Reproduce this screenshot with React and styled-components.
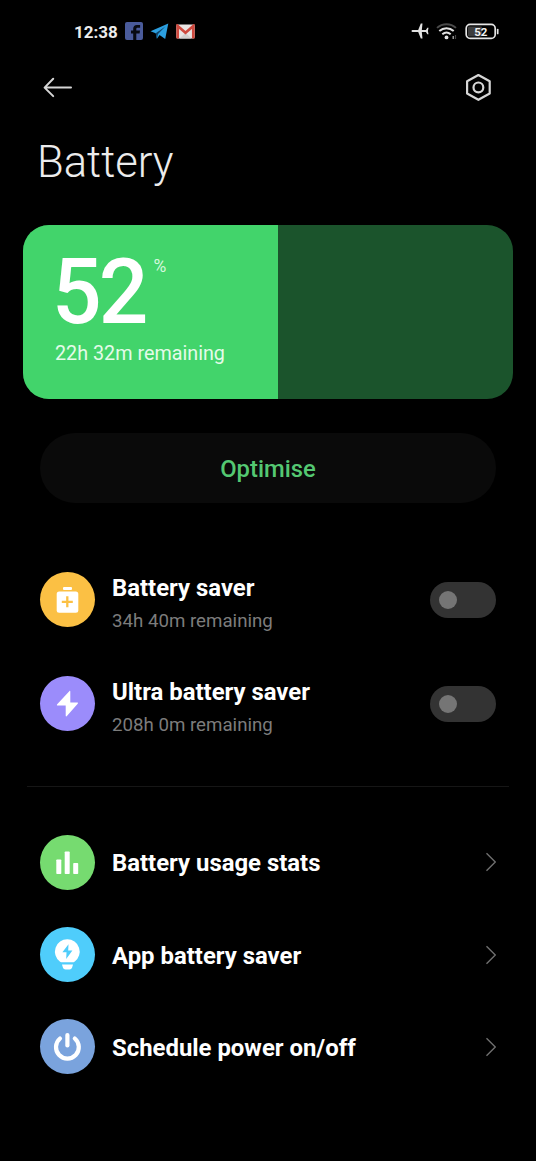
import React, { useState } from 'react';
import styled, { createGlobalStyle, css } from 'styled-components';


const GlobalStyle = createGlobalStyle`
  * { box-sizing: border-box; }
  body {
    margin: 0;
    background-color: #000;
    color: #fff;
    font-family: Roboto, "Liberation Sans", sans-serif;
  }
  button { font-family: inherit; border: none; padding: 0; cursor: pointer; }
`;
const Screen = styled('div')`
  width: 536px;
  height: 1161px;
  overflow: hidden;
  background-color: #000;
`;
const StatusBar = styled('div')`
  display: flex;
  justify-content: space-between;
  align-items: center;
  height: 62px;
  padding: 0 37px 0 74px;
`;
const StatusGroup = styled('div')`
  display: flex;
  align-items: center;
  gap: ${(p) => p.$gap}px;
`;
const Clock = styled('span')`
  width: 44px;
  padding-top: 1px;
  font-size: 17px;
  font-weight: 700;
  line-height: 20px;
  color: #ececec;
  white-space: nowrap;
`;
const NavBar = styled('header')`
  display: flex;
  justify-content: space-between;
  align-items: center;
  height: 52px;
  padding: 0 43px 0 42px;
`;
const IconButton = styled('button')`
  display: flex;
  background: none;
  color: #d6d6d6;
`;
const Title = styled('h1')`
  margin: 23px 0 0 37px;
  font-size: 43.6px;
  font-weight: 300;
  line-height: 52px;
  color: #ececec;
`;
const Gauge = styled('section')`
  display: flex;
  width: 490px;
  height: 174px;
  margin: 36px 0 0 23px;
  border-radius: 26px;
  overflow: hidden;
  background-color: #1b542c;
`;
const GaugeFill = styled('div')`
  height: 100%;
  padding: 27px 0 0 32px;
  background-color: #42d46b;
  white-space: nowrap;
`;
const Level = styled('div')`
  display: flex;
  align-items: flex-start;
  height: 86px;
`;
const LevelValue = styled('span')`
  margin-left: -3px;
  font-size: 91px;
  font-weight: 500;
  line-height: 80px;
  letter-spacing: -3px;
  transform: scaleX(0.96);
  transform-origin: left;
`;
const LevelUnit = styled('span')`
  margin: 3px 0 0 4px;
  font-size: 17.5px;
  font-weight: 400;
  line-height: 22px;
  color: #d5f8de;
`;
const Remaining = styled('div')`
  margin-top: 4px;
  font-size: 19.75px;
  line-height: 24px;
  color: #e4fbe9;
`;
const OptimiseButton = styled('button')`
  display: block;
  width: 456px;
  height: 70px;
  margin: 34px 0 0 40px;
  padding-top: 1px;
  border-radius: 35px;
  background-color: #0a0a0a;
  color: #54c872;
  font-size: 23.8px;
  font-weight: 500;
`;
const List = styled('div')`
  display: flex;
  flex-direction: column;
  padding: 0 40px 0 39.5px;
  margin-top: ${(p) => p.$top}px;
`;
const Row = styled('div')`
  display: flex;
  align-items: center;
  height: ${(p) => (p.$tall ? 104.2 : 92.3)}px;
`;
const Badge = styled('div')`
  flex: none;
  width: 55px;
  height: 55px;
  border-radius: 50%;
  background-color: ${(p) => p.$color};
  svg { display: block; }
`;
const RowText = styled('div')`
  flex: 1;
  margin-left: 17.5px;
  padding-top: 2px;
  ${(p) => p.$raised && css`padding-top: 9px;`}
`;
const RowTitle = styled('div')`
  font-size: 23.9px;
  font-weight: 700;
  line-height: 28px;
  white-space: nowrap;
`;
const RowHint = styled('div')`
  margin-top: 5px;
  font-size: 18.7px;
  line-height: 28px;
  color: #7c7c7c;
`;
const Switch = styled('button')`
  display: flex;
  align-items: center;
  justify-content: ${(p) => (p.$on ? 'flex-end' : 'flex-start')};
  width: 66px;
  height: 36px;
  padding: 0 9px;
  border-radius: 18px;
  background-color: ${(p) => (p.$on ? '#42d46b' : '#333')};
`;
const Knob = styled('span')`
  width: 18px;
  height: 18px;
  border-radius: 50%;
  background-color: #757575;
`;
const Divider = styled('hr')`
  height: 1px;
  margin: 29.8px 27px 0;
  border: none;
  background-color: #161616;
`;

const FacebookIcon = () => (
  <svg width="18" height="18" viewBox="0 0 18 18">
    <rect width="18" height="18" rx="2" fill="#4a5b9b" />
    <path d="M8.200 18v-6.600H6V8.500h2.200V6.700c0-2.400 1.400-3.800 3.700-3.800h3.200v2.900h-2.300c-1.100 0-1.500.5-1.500 1.400v1.300h3.700l-.4 2.900h-3.300V18z" fill="#080a12" />
  </svg>
);
const TelegramIcon = () => (
  <svg width="19" height="17" viewBox="0 0 19 17">
    <path d="M.5 8.200 18.300.6 15.200 15.900 9.600 12 6.900 15.700 5.700 10.200z" fill="#2b9fe0" />
    <path d="M5.700 10.200 15.400 3.400 8 11 6.900 15.700z" fill="#0d4268" />
  </svg>
);
const MailIcon = () => (
  <svg width="19" height="15" viewBox="0 0 19 15">
    <rect x=".3" y=".5" width="18.400" height="14" rx="1.400" fill="#e9e4e3" />
    <path d="M3.500 14.500 9.500 8.700l6 5.800z" fill="#d3cfce" />
    <path d="M1.700 14.500V2l7.800 6.700L17.300 2v12.500" fill="none" stroke="#cf493e" strokeWidth="2.700" />
  </svg>
);
const PlaneIcon = () => (
  <svg width="18" height="18" viewBox="0 0 18 18">
    <path d="M.5 9C.5 8.300 1.200 8 2 8h5.200L9.800 1.500H11.500L10.800 8h4.100l1.400-2.300h1.200L16.900 9l.6 3.300h-1.200L14.900 10h-4.100l.7 6.500H9.800L7.200 10H2C1.200 10 .5 9.700.5 9z" fill="#e2e2e2" />
  </svg>
);
const WifiIcon = () => (
  <svg width="22" height="18" viewBox="0 0 22 18" fill="none">
    <path d="M1 5.900C6.400 1.100 14.600 1.100 20 5.900" stroke="#4a4a4a" strokeWidth="1.900" />
    <path d="M3.300 9c4.200-3.700 10.200-3.700 14.400 0M6.300 12.300c2.500-2.200 5.900-2.200 8.400 0" stroke="#e2e2e2" strokeWidth="2" />
    <circle cx="10.500" cy="15.400" r="1.900" fill="#e2e2e2" />
    <path d="M17.200 14v3" stroke="#bbb" strokeWidth="1.200" />
    <path d="M19.500 13v4" stroke="#444" strokeWidth="1.200" />
  </svg>
);
const BatteryIcon = () => (
  <svg width="34" height="17" viewBox="0 0 34 17">
    <rect x="3" y="3.500" width="14" height="10" rx="1" fill="#3d3d3d" />
    <rect x="1.200" y="1.400" width="29" height="14" rx="4" fill="none" stroke="#e6e6e6" strokeWidth="1.700" />
    <path d="M32.700 6.500v4" stroke="#e6e6e6" strokeWidth="1.700" strokeLinecap="round" />
    <text x="15.800" y="12.600" textAnchor="middle" fontSize="11.500" fontWeight="700" fill="#f2f2f2">52</text>
  </svg>
);
const BackIcon = () => (
  <svg width="32" height="24" viewBox="0 0 32 24" fill="none" stroke="currentColor" strokeWidth="2" strokeLinecap="round" strokeLinejoin="round">
    <path d="M29 11.600H2.800M11.200 2.800 2.600 11.600l8.600 8.500" />
  </svg>
);
const SettingsIcon = () => (
  <svg width="30" height="30" viewBox="0 0 30 30" fill="none" stroke="currentColor" strokeWidth="2.200" strokeLinejoin="round">
    <path d="M15.400 2 26.700 8.300v12.200L15.400 26.800 4.100 20.500V8.300z" />
    <circle cx="15.400" cy="14.400" r="4.900" />
  </svg>
);
const SaverIcon = () => (
  <svg width="55" height="55" viewBox="0 0 55 55">
    <rect x="23" y="15" width="9" height="3" rx="1" fill="#fff" />
    <rect x="16.700" y="19.500" width="21.600" height="21.200" rx="2.500" fill="#fff" />
    <path d="M27.300 24.300v11M21.800 29.800h11" stroke="#fbc044" strokeWidth="2.300" />
  </svg>
);
const BoltIcon = () => (
  <svg width="55" height="55" viewBox="0 0 55 55">
    <path d="M29.300 15.200 17.200 28.200c-.6.7-.3 1.300.5 1.300H25.700V39.500c0 1 .6 1.200 1.200.5L37.700 27.700c.5-.7.3-1.200-.5-1.200H30.300V15.500c0-.8-.5-.9-1-.3z" fill="#fff" />
  </svg>
);
const StatsIcon = () => (
  <svg width="55" height="55" viewBox="0 0 55 55" fill="#fff">
    <rect x="16.300" y="24.500" width="5" height="14.500" rx=".8" />
    <rect x="24.700" y="16.500" width="5" height="22.500" rx=".8" />
    <rect x="33.200" y="28" width="5" height="11" rx=".8" />
  </svg>
);
const BulbIcon = () => (
  <svg width="55" height="55" viewBox="0 0 55 55">
    <path d="M27.300 12.300a12.300 12.300 0 0 0-7.500 22.100q1.100.9 2.500.9h10q1.400 0 2.500-.9a12.300 12.300 0 0 0-7.500-22.100z" fill="#fff" />
    <path d="M22 37.400h11l-.9 3.200q-.6 2-2.600 2h-4q-2 0-2.600-2z" fill="#fff" />
    <path d="M28.500 17.200 22.400 25.300h4.100L26.200 32l6.200-8.400h-4.200z" fill="#4fcdfb" />
  </svg>
);
const PowerIcon = () => (
  <svg width="55" height="55" viewBox="0 0 55 55" fill="none" stroke="#fff" strokeWidth="4.200" strokeLinecap="round">
    <path d="M20 19.500a11.400 11.400 0 1 0 14.800 0" />
    <path d="M27.400 16v10.500" />
  </svg>
);
const Chevron = () => (
  <svg width="14" height="22" viewBox="0 0 14 22" fill="none" stroke="#707070" strokeWidth="1.400">
    <path d="M4.500 2.200 13.300 11l-8.800 8.800" />
  </svg>
);

const modes = [
  { title: 'Battery saver', hint: '34h 40m remaining', color: '#fbc044', Icon: SaverIcon },
  { title: 'Ultra battery saver', hint: '208h 0m remaining', color: '#9b8cfb', Icon: BoltIcon },
];
const links = [
  { title: 'Battery usage stats', color: '#76db70', Icon: StatsIcon },
  { title: 'App battery saver', color: '#4fcdfb', Icon: BulbIcon },
  { title: 'Schedule power on/off', color: '#7aa3dd', Icon: PowerIcon },
];

const ModeRow = ({ title, hint, color, Icon }) => {
  const [on, setOn] = useState(false);
  return (
    <Row $tall>
      <Badge $color={color}><Icon /></Badge>
      <RowText $raised>
        <RowTitle>{title}</RowTitle>
        <RowHint>{hint}</RowHint>
      </RowText>
      <Switch $on={on} onClick={() => setOn(!on)} aria-label={title}>
        <Knob />
      </Switch>
    </Row>
  );
};

const App = () => {
  const level = 52;
  return (
    <Screen>
      <GlobalStyle />
      <StatusBar>
        <StatusGroup $gap={7}>
          <Clock>12:38</Clock>
          <FacebookIcon />
          <TelegramIcon />
          <MailIcon />
        </StatusGroup>
        <StatusGroup $gap={7}>
          <PlaneIcon />
          <WifiIcon />
          <BatteryIcon />
        </StatusGroup>
      </StatusBar>
      <NavBar>
        <IconButton aria-label="Back"><BackIcon /></IconButton>
        <IconButton aria-label="Settings"><SettingsIcon /></IconButton>
      </NavBar>
      <Title>Battery</Title>
      <Gauge>
        <GaugeFill style={{ width: `${level}%` }}>
          <Level>
            <LevelValue>{level}</LevelValue>
            <LevelUnit>%</LevelUnit>
          </Level>
          <Remaining>22h 32m remaining</Remaining>
        </GaugeFill>
      </Gauge>
      <OptimiseButton>Optimise</OptimiseButton>
      <List $top={44.6}>
        {modes.map((m) => <ModeRow key={m.title} {...m} />)}
      </List>
      <Divider />
      <List $top={29.4}>
        {links.map(({ title, color, Icon }) => (
          <Row key={title}>
            <Badge $color={color}><Icon /></Badge>
            <RowText>
              <RowTitle>{title}</RowTitle>
            </RowText>
            <Chevron />
          </Row>
        ))}
      </List>
    </Screen>
  );
};

export default App;
